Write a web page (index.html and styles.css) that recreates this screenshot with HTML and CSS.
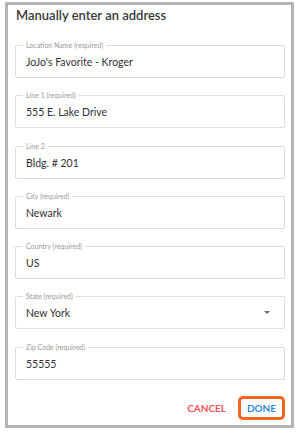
FILE: index.html
```html
<!doctype html>
<html>
  <head>
    <meta name="viewport" content="width=device-width, initial-scale=1.0" />
    <title>Manually enter an address</title>
    <link rel="stylesheet" href="styles.css">
  </head>
  <body>
    <div class="dialog">
      <h2 class="dialog-title">Manually enter an address</h2>

      <form class="address-form">
        <div class="field">
          <label>Location Name (required)</label>
          <input type="text" value="JoJo's Favorite - Kroger" />
        </div>
        <div class="field">
          <label>Line 1 (required)</label>
          <input type="text" value="555 E. Lake Drive" />
        </div>
        <div class="field">
          <label>Line 2</label>
          <input type="text" value="Bldg. # 201" />
        </div>
        <div class="field">
          <label>City (required)</label>
          <input type="text" value="Newark" />
        </div>
        <div class="field">
          <label>Country (required)</label>
          <input type="text" value="US" />
        </div>
        <div class="field select">
          <label>State (required)</label>
          <div class="select-value">New York</div>
          <span class="caret"></span>
        </div>
        <div class="field">
          <label>Zip Code (required)</label>
          <input type="text" value="55555" />
        </div>
      </form>

      <div class="actions">
        <button class="btn cancel">Cancel</button>
        <button class="btn done">Done</button>
      </div>
    </div>
  </body>
</html>
```

FILE: styles.css
```css
html,
body {
  --text: #333333;
  --label: #9a9a9a;
  --line: #dcdcdc;
  --frame: #b4b4b4;
  --red: #f1535b;
  --blue: #2f86dd;
  --orange: #f3661f;

  margin: 0;
  background: #fff;
  color: var(--text);
  font-family: 'Lato', 'Liberation Sans', sans-serif;
  -webkit-font-smoothing: antialiased;
}

.dialog {
  box-sizing: border-box;
  width: 289px;
  height: 426px;
  margin: 2px 0 0 5px;
  padding: 0 6px 0 7px;
  border: 3px solid var(--frame);
  background: #fff;
}

.dialog-title {
  margin: 0 0 20px 1px;
  font-size: 13px;
  font-weight: 600;
  line-height: 20px;
  color: #3a3a3a;
}

.address-form {
  display: flex;
  flex-direction: column;
  gap: 17.3px;
}

.field {
  position: relative;
  box-sizing: border-box;
  height: 33px;
  border: 1px solid var(--line);
  border-radius: 2px;
  display: flex;
  align-items: center;
}

.field label {
  position: absolute;
  top: -5px;
  left: 7px;
  padding: 0 3px;
  background: #fff;
  font-size: 7px;
  line-height: 9px;
  color: var(--label);
}

.field input,
.select-value {
  flex: 1;
  border: 0;
  outline: 0;
  padding: 1px 0 0 10px;
  margin: 0;
  background: transparent;
  font-family: inherit;
  font-size: 10.5px;
  color: var(--text);
}

.caret {
  width: 0;
  height: 0;
  margin-right: 14px;
  border-left: 3px solid transparent;
  border-right: 3px solid transparent;
  border-top: 3px solid #6a6a6a;
}

.actions {
  display: flex;
  justify-content: flex-end;
  align-items: center;
  gap: 12px;
  margin-top: 16px;
}

.btn {
  font-family: inherit;
  font-size: 10px;
  font-weight: 700;
  text-transform: uppercase;
  background: none;
  border: 0;
  padding: 0;
  cursor: pointer;
}

.cancel {
  color: var(--red);
}

.done {
  box-sizing: border-box;
  width: 47px;
  height: 24px;
  border: 3px solid var(--orange);
  border-radius: 5px;
  color: var(--blue);
}
```
